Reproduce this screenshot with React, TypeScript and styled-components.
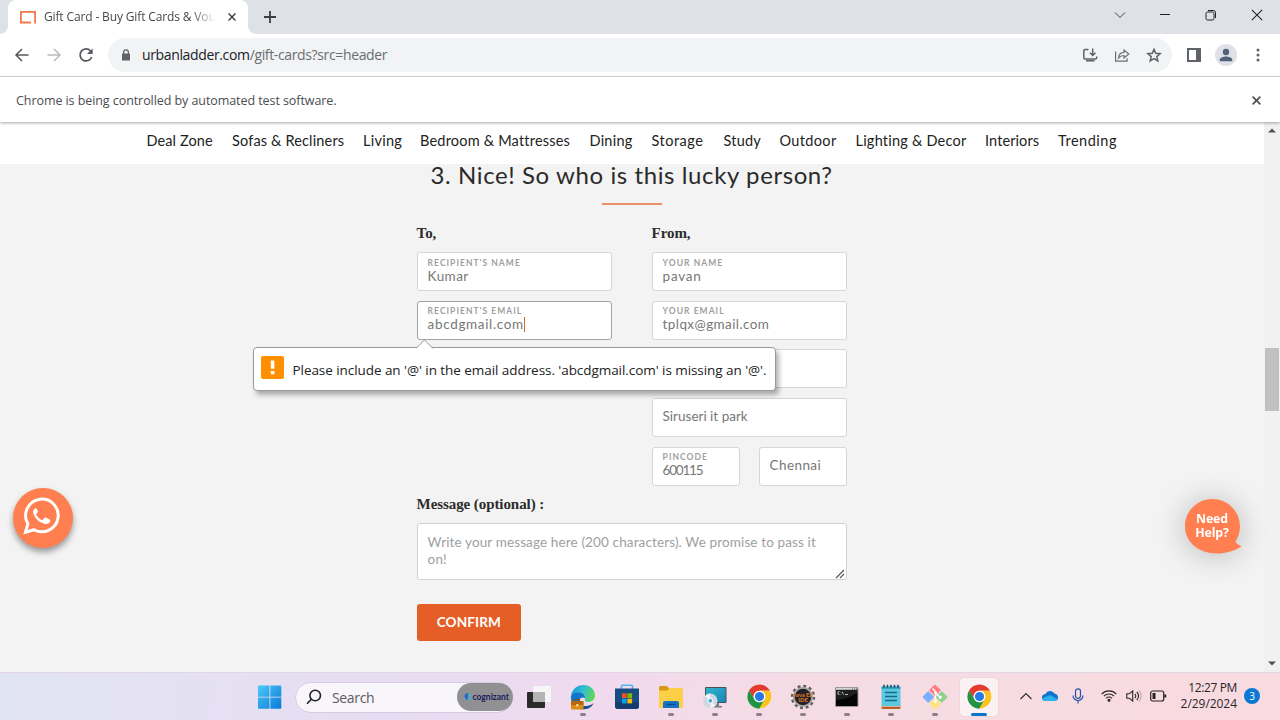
import React from "react";
import styled, { createGlobalStyle } from "styled-components";

const ui = `"Open Sans", "Noto Sans", sans-serif`;
const brand = `Lato, "Open Sans", sans-serif`;

const Global = createGlobalStyle`
  * { box-sizing: border-box; }
  body { margin: 0; overflow: hidden; background: #fff; }
  svg { display: block; flex: none; }
`;

const Desktop = styled.div`
  width: 1280px;
  height: 720px;
  display: flex;
  flex-direction: column;
  position: relative;
  font-family: ${ui};
  overflow: hidden;
`;

/* ---------- browser chrome ---------- */
const TabStrip = styled.div`
  height: 34px;
  flex: none;
  background: #dee1e6;
  display: flex;
  align-items: stretch;
  padding-left: 8px;
`;
const Tab = styled.div`
  width: 240px;
  background: #fff;
  border-radius: 8px 8px 0 0;
  display: flex;
  align-items: center;
  padding: 0 10px 0 12px;
  position: relative;
  &::before, &::after {
    content: "";
    position: absolute;
    bottom: 0;
    width: 8px;
    height: 8px;
  }
  &::before { left: -8px; background: radial-gradient(circle at 0 0, #dee1e6 7.5px, #fff 8.2px); }
  &::after { right: -8px; background: radial-gradient(circle at 100% 0, #dee1e6 7.5px, #fff 8.2px); }
`;
const TabTitle = styled.div`
  width: 170px;
  margin: 0 14px 0 8px;
  overflow: hidden;
  white-space: nowrap;
  font-size: 12px;
  letter-spacing: -0.14px;
  line-height: 18px;
  color: #45494d;
  mask-image: linear-gradient(90deg, #000 148px, transparent 172px);
`;
const NewTab = styled.div`
  display: flex;
  align-items: center;
  padding-left: 16px;
`;
const WindowControls = styled.div`
  margin-left: auto;
  display: flex;
  align-items: center;
  gap: 34px;
  padding: 0 17px 5px 0;
`;
const Toolbar = styled.div`
  height: 43px;
  flex: none;
  background: #fff;
  border-bottom: 1px solid #dadce0;
  display: flex;
  align-items: center;
`;
const NavButtons = styled.div`
  display: flex;
  width: 108px;
  padding-left: 14px;
  gap: 16px;
`;
const Omnibox = styled.div`
  width: 1064px;
  height: 34px;
  border-radius: 17px;
  background: #f1f3f4;
  display: flex;
  align-items: center;
  padding: 0 10px 0 12px;
`;
const Url = styled.div`
  flex: 1;
  padding-left: 10px;
  font-size: 14px;
  letter-spacing: -0.36px;
  line-height: 20px;
  color: #202124;
  white-space: nowrap;
  span { color: #6a6e73; }
`;
const OmniActions = styled.div`
  display: flex;
  gap: 16px;
`;
const ToolbarActions = styled.div`
  display: flex;
  align-items: center;
  padding-left: 15px;
`;
const Avatar = styled.div`
  width: 22px;
  height: 22px;
  border-radius: 50%;
  background: #dee1e6;
  margin: 0 15px 0 14px;
  display: flex;
  align-items: center;
  justify-content: center;
`;
const InfoBar = styled.div`
  height: 45px;
  flex: none;
  background: #fff;
  display: flex;
  align-items: center;
  justify-content: space-between;
  padding: 1px 19px 0 16px;
  font-size: 12.5px;
  letter-spacing: -0.07px;
  color: #4a4d51;
  box-shadow: 0 1px 3px rgba(0, 0, 0, 0.35);
  z-index: 3;
`;

/* ---------- shop page ---------- */
const Viewport = styled.div`
  height: 550px;
  flex: none;
  display: flex;
  position: relative;
`;
const Page = styled.div`
  width: 1264px;
  background: #f3f3f3;
  font-family: ${brand};
`;
const MenuBar = styled.nav`
  height: 42px;
  background: #fff;
  padding: 9px 0 0 146.5px;
  display: grid;
  grid-template-columns: 85.5px 131px 57px 169.5px 62px 72px 56px 76px 129.5px 73px 60px;
`;
const MenuItem = styled.a<{ $ls: number }>`
  font-size: 14.5px;
  line-height: 19px;
  letter-spacing: ${(p) => p.$ls}px;
  color: #222;
  white-space: nowrap;
`;
const Form = styled.form`
  width: 430px;
  margin-left: 416.6px;
  display: flex;
  flex-direction: column;
`;
const Title = styled.h2`
  margin: -5px -40px 0;
  font-weight: 400;
  font-size: 24px;
  line-height: 32px;
  letter-spacing: 0.6px;
  color: #2a2a2a;
  text-align: center;
  white-space: nowrap;
`;
const Rule = styled.div`
  width: 60px;
  height: 2px;
  background: #e9906b;
  margin-top: 12px;
  align-self: center;
`;
const Columns = styled.div`
  display: flex;
  justify-content: space-between;
  margin-top: 17px;
`;
const Column = styled.div`
  width: 195px;
  display: flex;
  flex-direction: column;
`;
const Legend = styled.div`
  font-family: "Liberation Serif", serif;
  font-weight: 700;
  font-size: 15px;
  line-height: 22px;
  letter-spacing: -0.08px;
  color: #2c2c2c;
  white-space: nowrap;
`;
const MessageLegend = styled(Legend)`
  margin-top: 7px;
`;
const Fields = styled.div`
  display: flex;
  flex-direction: column;
  gap: 9.7px;
  margin-top: 8px;
`;
const Pair = styled.div`
  display: grid;
  grid-template-columns: 88px 88px;
  justify-content: space-between;
`;
const FieldBox = styled.div<{ $focus?: boolean }>`
  height: 39px;
  background: #fff;
  border: 1px solid ${(p) => (p.$focus ? "#a3a3a3" : "#d6d6d6")};
  border-radius: 3px;
  padding: 0 10px 1px;
  display: flex;
  flex-direction: column;
  justify-content: center;
`;
const FieldLabel = styled.div`
  font-size: 8.5px;
  font-weight: 700;
  letter-spacing: 1.04px;
  line-height: 10px;
  padding-top: 1px;
  color: #a0a0a0;
  white-space: nowrap;
  text-transform: uppercase;
`;
const FieldValue = styled.div<{ $ls?: number }>`
  font-size: 13.5px;
  line-height: 16px;
  height: 18px;
  letter-spacing: ${(p) => p.$ls ?? 0.3}px;
  color: #777;
  white-space: nowrap;
  display: flex;
`;
const Caret = styled.i`
  width: 1px;
  height: 15px;
  margin-top: 1px;
  background: #e4602a;
`;
const Message = styled.div`
  height: 57px;
  margin-top: 8px;
  background: #fff;
  border: 1px solid #d3d3d3;
  border-radius: 3px;
  padding: 10px 10px;
  font-size: 13.5px;
  letter-spacing: 0.13px;
  line-height: 17.5px;
  color: #a0a0a0;
  position: relative;
  svg { position: absolute; right: 1px; bottom: 0; }
`;
const Confirm = styled.div`
  width: 104.500px;
  height: 37px;
  margin-top: 24px;
  border-radius: 3px;
  background: #e55e25;
  color: #fff;
  font-size: 13.6px;
  font-weight: 700;
  letter-spacing: 0.1px;
  line-height: 36px;
  text-align: center;
`;
const Scrollbar = styled.div`
  width: 16px;
  background: #f1f1f1;
  display: flex;
  flex-direction: column;
  align-items: center;
  padding: 6px 0;
`;
const Thumb = styled.div`
  width: 14px;
  height: 63px;
  background: #c1c1c1;
  margin: 215px 0 auto;
`;
const Bubble = styled.div`
  position: absolute;
  left: 252.5px;
  top: 225px;
  width: 523px;
  height: 44px;
  background: #fff;
  border: 1px solid #999;
  border-radius: 4px;
  box-shadow: 3px 4px 5px rgba(0, 0, 0, 0.3);
  display: flex;
  align-items: center;
  padding: 1px 7.5px 0;
  font-size: 13.5px;
  letter-spacing: -0.06px;
  color: #222;
  white-space: nowrap;
`;
const BubbleTail = styled.svg`
  position: absolute;
  left: 162.5px;
  top: -9px;
`;
const Warn = styled.div`
  width: 23px;
  height: 23px;
  border-radius: 2px;
  background: #ff8f00;
  margin: -5px 8.500px 0 0;
`;
const WhatsApp = styled.div`
  position: absolute;
  left: 12.5px;
  top: 366px;
  width: 60px;
  height: 60px;
  border-radius: 50%;
  background: #ff7f50;
  box-shadow: 0 4px 6px rgba(0, 0, 0, 0.38);
  padding: 9px 0 0 9px;
`;
const Help = styled.div`
  position: absolute;
  left: 1185px;
  top: 376px;
  width: 58px;
  height: 56px;
  filter: drop-shadow(0 2px 15px rgba(0, 0, 0, 0.24));
`;
const HelpText = styled.div`
  position: absolute;
  left: 0;
  top: 14px;
  width: 54px;
  text-align: center;
  font: 700 12.3px/14px ${ui};
  letter-spacing: -0.1px;
  color: #fff;
`;

/* ---------- taskbar ---------- */
const Taskbar = styled.div`
  height: 48px;
  flex: none;
  display: flex;
  align-items: center;
  padding-left: 258px;
  background: linear-gradient(97deg, #e1e4f4 0%, #e9dcf2 35%, #f1daee 47%, #f5dce4 62%, #f8dbe0 100%);
  border-top: 1px solid #e2d5e3;
`;
const Search = styled.div`
  width: 218px;
  height: 31px;
  margin: 1px 4px 0 13px;
  border: 1px solid #d6cbe0;
  border-radius: 16px;
  background: #f8f5fb;
  display: flex;
  align-items: center;
  padding-left: 10px;
  font-size: 14px;
  letter-spacing: -0.35px;
  color: #5c5a60;
  span { margin-left: 10px; flex: 1; }
`;
const Pill = styled.div`
  width: 56px;
  height: 28px;
  margin-right: -0.5px;
  border-radius: 14px;
  background: #919193;
  display: flex;
  align-items: center;
  padding-left: 7px;
  gap: 1px;
  font: 700 8.5px/10px ${brand};
  letter-spacing: 0;
  color: #1c1c5e;
`;
const AppButton = styled.div<{ $active?: boolean; $running?: boolean }>`
  width: 38px;
  height: 38px;
  margin: 0 3px;
  border-radius: 4px;
  display: flex;
  align-items: center;
  justify-content: center;
  position: relative;
  background: ${(p) => (p.$active ? "rgba(255,255,255,.6)" : "transparent")};
  box-shadow: ${(p) => (p.$active ? "0 0 1px rgba(0,0,0,.25)" : "none")};
  &::after {
    content: "";
    position: absolute;
    bottom: 0;
    width: ${(p) => (p.$active ? 16 : 6)}px;
    height: 3px;
    border-radius: 2px;
    background: ${(p) => (p.$active ? "#0a74cf" : p.$running ? "#8c7f89" : "transparent")};
  }
`;
const Tray = styled.div`
  margin-left: auto;
  display: flex;
  align-items: center;
  padding: 0 20px 2px 0;
`;
const Slot = styled.div<{ $w: number }>`
  width: ${(p) => p.$w}px;
  display: flex;
  justify-content: center;
`;
const Clock = styled.div`
  width: 63px;
  text-align: right;
  font-size: 12px;
  line-height: 15.5px;
  letter-spacing: -0.38px;
  color: #2b2528;
  white-space: nowrap;
  span { letter-spacing: -0.05px; }
`;
const Badge = styled.div`
  width: 16px;
  height: 16px;
  border-radius: 50%;
  margin-left: 7px;
  background: #0a78d4;
  color: #fff;
  font-size: 10px;
  line-height: 16px;
  text-align: center;
`;

/* ---------- drawings ---------- */
const Cross = ({ s, c, w }: { s: number; c: string; w: number }) => (
  <svg width={s} height={s} viewBox="0 0 10 10" stroke={c} strokeWidth={w} fill="none">
    <path d="M.7.7l8.6 8.6M9.3.7L.7 9.3" />
  </svg>
);

const Lock = () => (
  <svg width="12" height="12" viewBox="0 0 24 24" fill="#5f6368">
    <path d="M20 9h-2V6.500a6 6 0 0 0-12 0V9H4v14h16V9zM8.500 9V6.500a3.500 3.500 0 0 1 7 0V9z" />
  </svg>
);

const Chrome = () => (
  <svg width="25" height="25" viewBox="0 0 48 48">
    <circle cx="24" cy="24" r="23" fill="#fff" />
    <path d="M24 13h20.3A23.4 23.4 0 0 0 3.8 12.3L14 29.5A11 11 0 0 1 24 13z" fill="#e33b2e" />
    <path d="M33.6 29.5L23.5 47A23.4 23.4 0 0 0 44.3 13H24a11 11 0 0 1 9.6 16.5z" fill="#fcc31e" />
    <path d="M14.4 29.5L3.8 12.3A23.4 23.4 0 0 0 23.5 47.4l10.1-17.9a11 11 0 0 1-19.2 0z" fill="#229342" />
    <circle cx="24" cy="24" r="11" fill="#fff" />
    <circle cx="24" cy="24" r="8.8" fill="#2879e8" />
  </svg>
);

const StartIcon = () => (
  <svg width="24" height="24" viewBox="0 0 24 24">
    <defs>
      <linearGradient id="win" x1="0" y1="0" x2="1" y2="1" gradientUnits="objectBoundingBox">
        <stop offset="0" stopColor="#4cc8f8" />
        <stop offset="1" stopColor="#0a79d6" />
      </linearGradient>
    </defs>
    <path d="M1 .5h10.500v11.200H0V1.500a1 1 0 0 1 1-1zM12.300.5h10a1 1 0 0 1 1 1v10.200h-11zM0 12.500h11.500v11.200H1a1 1 0 0 1-1-1zM12.300 12.500h11v10.200a1 1 0 0 1-1 1h-10z" fill="url(#win)" />
  </svg>
);

const EdgeIcon = () => (
  <svg width="26" height="26" viewBox="0 0 26 26">
    <defs>
      <linearGradient id="edge" x1="0" y1=".2" x2="1" y2=".5">
        <stop offset="0" stopColor="#1b96dc" />
        <stop offset=".5" stopColor="#2fc0d0" />
        <stop offset="1" stopColor="#5fd857" />
      </linearGradient>
    </defs>
    <path d="M1 12C2 5 7 1 13.4 1 20.500 1 25 6 25 11.500c0 4-3 6.500-6.800 6.500-2.600 0-4-1-3.400-2.200 1.600-3-.6-7.300-5.300-7.300C5.500 8.500 2 10 1 12z" fill="url(#edge)" />
    <path d="M1 12c1-2.500 4-4 8-3.700 4 .2 6.500 3 6 6-3-2-6.300.5-6 4.500.3 3.500 2.500 5.700 5.500 6.400C6 26.500.2 19.500 1 12z" fill="#1276c8" />
    <path d="M9 17c0 4 4.500 5.500 8 5 2.500-.3 5-1.500 6.500-3-1.500 4-5 6.300-9.500 6.200-3.500 0-5.500-4-5-8.200z" fill="#174f91" />
    <rect x="1" y="17" width="12.500" height="8.500" rx="1" fill="#d98b16" />
    <path d="M1 18a1 1 0 0 1 1-1h10.500a1 1 0 0 1 1 1v3H1z" fill="#b46a0c" />
    <path d="M5 17v-1.500h4.500V17" stroke="#8a4f08" fill="none" />
    <rect x="6.300" y="20" width="2" height="2.500" fill="#ffe08a" />
  </svg>
);

const StoreIcon = () => (
  <svg width="26" height="26" viewBox="0 0 26 26">
    <path d="M7.500 5V2.300a1 1 0 0 1 1-1h9a1 1 0 0 1 1 1V5" stroke="#45b9ee" strokeWidth="1.600" fill="none" />
    <path d="M1 4.500h24V22a3 3 0 0 1-3 3H4a3 3 0 0 1-3-3z" fill="#194c81" />
    <path d="M1 18h24v4a3 3 0 0 1-3 3H4a3 3 0 0 1-3-3z" fill="#153d70" />
    <path d="M8 9.300h4.700V14H8z" fill="#f25022" />
    <path d="M13.400 9.300h4.700V14h-4.700z" fill="#7fba00" />
    <path d="M8 14.700h4.700v4.700H8z" fill="#00a4ef" />
    <path d="M13.400 14.700h4.700v4.700h-4.700z" fill="#ffb900" />
  </svg>
);

const FolderIcon = () => (
  <svg width="26" height="26" viewBox="0 0 26 26">
    <path d="M1 3.500A1.500 1.500 0 0 1 2.500 2h6l2.500 2v5H1z" fill="#d99a13" />
    <path d="M1 6.500h8.500L11.500 4h12A1.500 1.500 0 0 1 25 5.500v17a1.500 1.500 0 0 1-1.500 1.500h-21A1.500 1.500 0 0 1 1 22.500z" fill="#fbcf46" />
    <path d="M5 24v-5a2 2 0 0 1 2-2h12a2 2 0 0 1 2 2v5z" fill="#1673c4" />
    <path d="M8.500 20.500h9" stroke="#0b4c8f" strokeWidth="1.400" />
  </svg>
);

const PcIcon = () => (
  <svg width="26" height="26" viewBox="0 0 26 26">
    <defs>
      <linearGradient id="pc" x1="0" y1="0" x2="1" y2="1">
        <stop offset="0" stopColor="#31b4c9" />
        <stop offset="1" stopColor="#1686bb" />
      </linearGradient>
    </defs>
    <rect x="3" y="3" width="21.500" height="16" rx="1" fill="#4a5157" />
    <rect x="4" y="4" width="19.500" height="14" fill="url(#pc)" />
    <path d="M12 19h5v3h3v1.500h-9z" fill="#777d82" />
    <circle cx="8.300" cy="16.800" r="7.200" fill="#cfd8e0" />
    <path d="M8.300 16.800L3 12a7 7 0 0 1 5-2.400zM8.300 16.800l5.300 4.800a7 7 0 0 1-5 2.400z" fill="#eef3f6" />
    <circle cx="8.300" cy="16.800" r="2.400" fill="#53a3cc" stroke="#fff" />
  </svg>
);

const GearIcon = () => (
  <svg width="26" height="26" viewBox="0 0 26 26">
    <circle cx="13" cy="13" r="10.700" fill="none" stroke="#605c5d" strokeWidth="3" strokeDasharray="2.800 2.800" />
    <circle cx="13" cy="13" r="9.200" fill="#252028" stroke="#aaa8a8" strokeWidth="1.800" />
    <text x="13" y="12.600" textAnchor="middle" fontFamily="Lato" fontWeight="900" fontSize="5.800" fill="#d87a24">Java EE</text>
    <text x="13" y="18.300" textAnchor="middle" fontFamily="Lato" fontWeight="900" fontSize="5.800" fill="#d87a24">IDE</text>
  </svg>
);

const CmdIcon = () => (
  <svg width="24" height="20" viewBox="0 0 24 20">
    <rect x=".5" y=".5" width="22.500" height="19" rx=".8" fill="#050505" stroke="#9b9b9b" />
    <path d="M1 1h21.500v1.800H1z" fill="#d8d8d8" />
    <path d="M17 2h1M19 2h1M21 2h1" stroke="#555" />
    <path d="M4.500 4.700H3v2.600h1.500M6 5v.5M6 7v.5M7.300 4.700l1.200 2.800M10 7.500h3" stroke="#ddd" strokeWidth=".8" fill="none" />
    <path d="M1 13Q12 12 22.500 6V3H1z" fill="#fff" opacity=".1" />
  </svg>
);

const NotepadIcon = () => (
  <svg width="24" height="26" viewBox="0 0 24 26">
    <path d="M2.500 21h19v3a1 1 0 0 1-1 1h-17a1 1 0 0 1-1-1z" fill="#b8622a" />
    <path d="M2.500 21h19v1.500h-19z" fill="#fff" />
    <rect x="2.500" y="2.500" width="19" height="19.500" rx="1" fill="#5cc8de" />
    <path d="M2.500 3.500a1 1 0 0 1 1-1h17a1 1 0 0 1 1 1V5h-19z" fill="#35a4c0" />
    <path d="M5 .8v3M8.500 .8v3M12 .8v3M15.500 .8v3M19 .8v3" stroke="#164f6e" strokeWidth="1.500" />
    <path d="M6 8.500h12M6 12.500h12M6 16.500h12" stroke="#136a8c" strokeWidth="1.600" />
  </svg>
);

const GitIcon = () => (
  <svg width="26" height="26" viewBox="0 0 26 26">
    <g transform="rotate(45 13 13)">
      <rect x="4" y="4" width="8.500" height="8.500" rx="1" fill="#ff7d80" />
      <rect x="13.500" y="4" width="8.500" height="8.500" rx="1" fill="#8fd18b" />
      <rect x="4" y="13.500" width="8.500" height="8.500" rx="1" fill="#7caeff" />
      <rect x="13.500" y="13.500" width="8.500" height="8.500" rx="1" fill="#ffe182" />
    </g>
    <path d="M10.500 4.500l3 3v10M13.500 9l5 4.500" stroke="#fff" strokeWidth="1.200" fill="none" />
    <circle cx="13.500" cy="8.500" r="1.500" fill="#fff" />
    <circle cx="13.500" cy="17.500" r="1.500" fill="#fff" />
    <circle cx="18.300" cy="13.200" r="1.500" fill="#fff" />
  </svg>
);

const TaskViewIcon = () => (
  <svg width="26" height="24" viewBox="0 0 26 24">
    <rect x="1" y="7" width="18" height="16" rx="1" fill="#2b2b2b" />
    <rect x="7" y="1" width="18" height="16" rx="1" fill="#f8f8f8" opacity=".93" />
    <path d="M7 7h12v10H7z" fill="#b5b5b5" />
  </svg>
);

type FieldProps = { label?: string; value?: string; focus?: boolean; ls?: number };
const Field = ({ label, value, focus, ls }: FieldProps) => (
  <FieldBox $focus={focus}>
    {label && <FieldLabel>{label}</FieldLabel>}
    {value && (
      <FieldValue $ls={ls}>
        {value}
        {focus && <Caret />}
      </FieldValue>
    )}
  </FieldBox>
);

const menu: [string, number][] = [
  ["Deal Zone", 0.1],
  ["Sofas & Recliners", 0.16],
  ["Living", 0.25],
  ["Bedroom & Mattresses", 0.2],
  ["Dining", 0.25],
  ["Storage", 0.5],
  ["Study", 0.2],
  ["Outdoor", 0.35],
  ["Lighting & Decor", 0.22],
  ["Interiors", 0.1],
  ["Trending", 0.5],
];

export default function App() {
  return (
    <Desktop>
      <Global />
      <TabStrip>
        <Tab>
          <svg width="16" height="14" viewBox="0 0 16 14" fill="none" stroke="#f07a48" strokeWidth="1.800">
            <path d="M11 12.500H.9V1.900h14.200v11.600" />
          </svg>
          <TabTitle>Gift Card - Buy Gift Cards &amp; Vouchers</TabTitle>
          <Cross s={8} c="#3c4043" w={1.8} />
        </Tab>
        <NewTab>
          <svg width="12" height="12" viewBox="0 0 12 12" stroke="#3c4043" strokeWidth="1.800">
            <path d="M6 0v12M0 6h12" />
          </svg>
        </NewTab>
        <WindowControls>
          <svg width="12" height="8" viewBox="0 0 12 8" fill="none" stroke="#444" strokeWidth="1"><path d="M1 1.500l5 5 5-5" /></svg>
          <svg width="11" height="10" viewBox="0 0 11 10" stroke="#222" strokeWidth="1"><path d="M0 4.500h10" /></svg>
          <svg width="12" height="12" viewBox="0 0 12 12" fill="none" stroke="#222" strokeWidth="1">
            <rect x="1" y="3" width="8" height="8" rx="1.500" /><path d="M3 1.500h5.500a2 2 0 0 1 2 2V9" />
          </svg>
          <Cross s={12} c="#222" w={0.9} />
        </WindowControls>
      </TabStrip>
      <Toolbar>
        <NavButtons>
          <svg width="16" height="16" viewBox="0 0 16 16" fill="none" stroke="#55595e" strokeWidth="1.500"><path d="M14.500 8H2.500M8 2L2 8l6 6" /></svg>
          <svg width="16" height="16" viewBox="0 0 16 16" fill="none" stroke="#b9bbbe" strokeWidth="1.500"><path d="M1.500 8h12M8 2l6 6-6 6" /></svg>
          <svg width="16" height="16" viewBox="0 0 16 16" fill="none" stroke="#55595e" strokeWidth="1.700">
            <path d="M13.700 10A6 6 0 1 1 12.600 4" /><path d="M14.600 1.500v5.500H9z" fill="#55595e" stroke="none" />
          </svg>
        </NavButtons>
        <Omnibox>
          <Lock />
          <Url>urbanladder.com<span>/gift-cards?src=header</span></Url>
          <OmniActions>
            <svg width="16" height="16" viewBox="0 0 16 16" fill="none" stroke="#5f6368" strokeWidth="1.500">
              <path d="M6.500 2.500H3A1.200 1.200 0 0 0 1.800 3.700v7A1.200 1.200 0 0 0 3 11.900h10.500a1.200 1.200 0 0 0 1.200-1.200V9.500M10.700 1.500v6.500M8 5.800l2.700 2.700 2.700-2.700M4 13.700h8.500" />
            </svg>
            <svg width="16" height="16" viewBox="0 0 16 16" fill="none" stroke="#6b6f74" strokeWidth="1.200">
              <path d="M1.600 4.500v9.700h11.500v-3M4.600 11c.3-3.800 2.300-5.600 5.400-5.600V3l4.800 4-4.800 4V8.500C7.600 8.500 5.900 9.300 4.600 11z" />
            </svg>
            <svg width="16" height="16" viewBox="0 0 16 16" fill="none" stroke="#5f6368" strokeWidth="1.500">
              <path d="M8 2.300l1.700 4 4.400.4-3.300 2.900 1 4.300L8 11.600l-3.800 2.300 1-4.300L1.900 6.700l4.400-.4z" />
            </svg>
          </OmniActions>
        </Omnibox>
        <ToolbarActions>
          <svg width="14" height="14" viewBox="0 0 14 14"><path d="M0 0h14v14H0zM2 2v10h7V2z" fill="#5f6368" fillRule="evenodd" /></svg>
          <Avatar>
            <svg width="14" height="14" viewBox="0 0 14 14" fill="#53617a"><circle cx="7" cy="4" r="3.200" /><path d="M.8 13.200v-1.600C.8 9.500 5 8.500 7 8.500s6.200 1 6.200 3.100v1.600z" /></svg>
          </Avatar>
          <svg width="12" height="14" viewBox="0 0 12 14" fill="#5f6368"><circle cx="6" cy="2" r="1.500" /><circle cx="6" cy="7" r="1.500" /><circle cx="6" cy="12" r="1.500" /></svg>
        </ToolbarActions>
      </Toolbar>
      <InfoBar>
        Chrome is being controlled by automated test software.
        <Cross s={9} c="#4a4d51" w={1.8} />
      </InfoBar>
      <Viewport>
        <Page>
          <MenuBar>
            {menu.map(([name, ls]) => <MenuItem key={name} $ls={ls}>{name}</MenuItem>)}
          </MenuBar>
          <Form>
            <Title>3. Nice! So who is this lucky person?</Title>
            <Rule />
            <Columns>
              <Column>
                <Legend>To,</Legend>
                <Fields>
                  <Field label="Recipient's name" value="Kumar" ls={0.45} />
                  <Field label="Recipient's email" value="abcdgmail.com" focus ls={0.65} />
                </Fields>
              </Column>
              <Column>
                <Legend>From,</Legend>
                <Fields>
                  <Field label="Your name" value="pavan" ls={0.75} />
                  <Field label="Your email" value="tplqx@gmail.com" ls={0.4} />
                  <Field />
                  <Field value="Siruseri it park" ls={0} />
                  <Pair>
                    <Field label="Pincode" value="600115" ls={-1.2} />
                    <Field value="Chennai" ls={0.4} />
                  </Pair>
                </Fields>
              </Column>
            </Columns>
            <MessageLegend>Message (optional) :</MessageLegend>
            <Message>
              Write your message here (200 characters). We promise to pass it on!
              <svg width="10" height="10" viewBox="0 0 10 10" stroke="#555" strokeWidth="1.100"><path d="M1 9l8-8M5 9l4-4" /></svg>
            </Message>
            <Confirm>CONFIRM</Confirm>
          </Form>
        </Page>
        <Scrollbar>
          <svg width="8" height="5" viewBox="0 0 8 5" fill="#505050"><path d="M0 4.500L4 .5l4 4z" /></svg>
          <Thumb />
          <svg width="8" height="5" viewBox="0 0 8 5" fill="#505050"><path d="M0 .5l4 4 4-4z" /></svg>
        </Scrollbar>
        <Bubble>
          <BubbleTail width="18" height="10" viewBox="0 0 18 10"><path d="M0 9.500L8.500 1l8.500 8.500" fill="#fff" stroke="#999" /><path d="M1 10h15" stroke="#fff" strokeWidth="1.200" /></BubbleTail>
          <Warn>
            <svg width="23" height="23" viewBox="0 0 23 23" fill="#fff"><path d="M9.800 4.500h3.600v8.300H9.800zM9.800 15h3.600v3.200H9.800z" /></svg>
          </Warn>
          Please include an '@' in the email address. 'abcdgmail.com' is missing an '@'.
        </Bubble>
        <WhatsApp>
          <svg width="40" height="40" viewBox="0 0 40 40">
            <path d="M3.500 35.200l2.400-8.400A16.300 16.300 0 1 1 12 32.700z" fill="none" stroke="#fff" strokeWidth="3" />
            <path d="M14.300 11.300c-.8-.2-1.800.3-2.500 1.300-1 1.500-.8 3.600.2 5.600 2.200 4.300 5.800 7.300 10.400 8.600 2.500.7 4.800-.2 5.600-2.300.3-.9.300-1.600-.2-1.900l-4.200-2c-.5-.2-.9 0-1.200.4l-1.500 1.800c-.4.400-.8.400-1.300.1-2.400-1.200-4-2.700-5.200-4.900-.3-.5-.2-.8.100-1.200l1.200-1.600c.3-.4.300-.8.100-1.300z" fill="#fff" />
          </svg>
        </WhatsApp>
        <Help>
          <svg width="58" height="56" viewBox="0 0 58 56"><path d="M27.500 1C42.500 1 55 13 55 28.500c0 6-2 11-4.500 15 1 2 3 3.500 6 5-7 4.500-17 7-24 7C13 55.500 0 44 0 28 0 13 12.500 1 27.500 1z" fill="#ff7f50" /></svg>
          <HelpText>Need<br />Help?</HelpText>
        </Help>
      </Viewport>
      <Taskbar>
        <StartIcon />
        <Search>
          <svg width="16" height="16" viewBox="0 0 16 16" fill="none" stroke="#222" strokeWidth="1.600"><circle cx="9.200" cy="6.500" r="5.300" /><path d="M5.400 10.300L1 14.800" /></svg>
          <span>Search</span>
          <Pill>
            <svg width="8" height="8" viewBox="0 0 8 8"><path d="M4.500 0A4 4 0 0 0 .5 4l3 4L4 4z" fill="#2a66c8" /><path d="M4.500 0l2.500 2L4 4zM3.500 8L8 5.500 4 4z" fill="#38b5d8" /></svg>
            cognizant
          </Pill>
        </Search>
        <AppButton><TaskViewIcon /></AppButton>
        <AppButton $running><EdgeIcon /></AppButton>
        <AppButton><StoreIcon /></AppButton>
        <AppButton $running><FolderIcon /></AppButton>
        <AppButton $running><PcIcon /></AppButton>
        <AppButton $running><Chrome /></AppButton>
        <AppButton $running><GearIcon /></AppButton>
        <AppButton $running><CmdIcon /></AppButton>
        <AppButton $running><NotepadIcon /></AppButton>
        <AppButton $running><GitIcon /></AppButton>
        <AppButton $active><Chrome /></AppButton>
        <Tray>
          <Slot $w={20}><svg width="12" height="8" viewBox="0 0 12 8" fill="none" stroke="#333" strokeWidth="1.200"><path d="M.5 7L6 1.500 11.500 7" /></svg></Slot>
          <Slot $w={28}>
            <svg width="16" height="11" viewBox="0 0 16 11">
              <path d="M3.500 4A5 5 0 0 1 12.500 3.500C15 4 16 5.500 16 7.500S14.500 11 13 11H3.500C1.500 11 0 9.500 0 7.500S1.500 4 3.500 4z" fill="#1273cd" />
              <path d="M3 11C1.500 11 .2 10 0 8.500L8 5l7.500 4.200c-.5 1.200-1.500 1.800-2.500 1.800z" fill="#2cb0ee" />
            </svg>
          </Slot>
          <Slot $w={28}><svg width="12" height="16" viewBox="0 0 12 16" fill="none" stroke="#2853a8" strokeWidth="1.200"><rect x="3.500" y=".8" width="5" height="9.500" rx="2.500" /><path d="M1 7.500a5 5 0 0 0 10 0M6 12.500v3" /></svg></Slot>
          <Slot $w={34}>
            <svg width="16" height="13" viewBox="0 0 16 13" fill="none" stroke="#2b2528" strokeWidth="1.100"><path d="M.7 5a10 10 0 0 1 14.600 0M2.900 7.200a7 7 0 0 1 10.200 0M5.100 9.300a4 4 0 0 1 5.800 0" /><circle cx="8" cy="11.200" r="1" fill="#2b2528" /></svg>
          </Slot>
          <Slot $w={16}>
            <svg width="16" height="14" viewBox="0 0 16 14" fill="none" stroke="#2b2528" strokeWidth="1.100"><path d="M.8 4.800v4.400h2.500L6.700 12V2L3.300 4.800zM8.800 4.800a3 3 0 0 1 0 4.400M10.800 3a5.500 5.500 0 0 1 0 8" /><path d="M12.800 1.400a8 8 0 0 1 0 11.200" stroke="#bda9af" /></svg>
          </Slot>
          <Slot $w={32}>
            <svg width="17" height="12" viewBox="0 0 17 12" fill="none" stroke="#2b2528" strokeWidth="1.200"><rect x=".7" y="1" width="13" height="10" rx="2" /><path d="M2.500 3h3v6h-3z" fill="#2b2528" stroke="none" /><path d="M15.200 4.500v3" strokeWidth="2" /></svg>
          </Slot>
          <Clock>12:27 PM<br /><span>2/29/2024</span></Clock>
          <Badge>3</Badge>
        </Tray>
      </Taskbar>
    </Desktop>
  );
}
